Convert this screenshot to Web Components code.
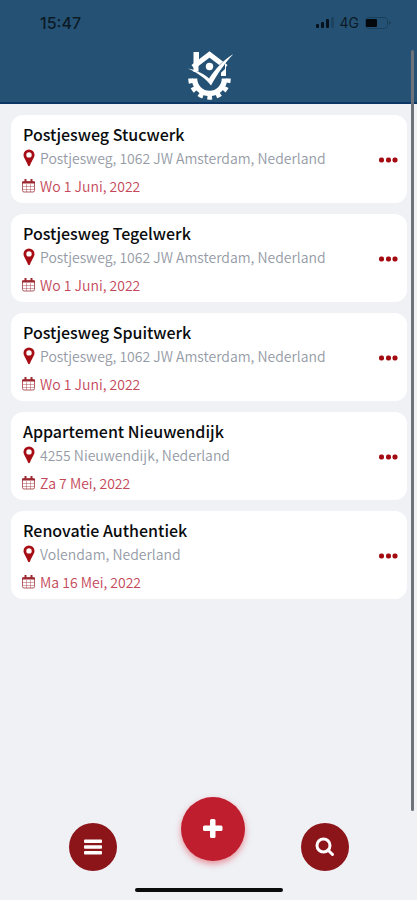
<!DOCTYPE html>
<html lang="nl">
<head>
<meta charset="utf-8">
<meta name="viewport" content="width=device-width, initial-scale=1">
<title>Projecten</title>
<style>
html, body { margin: 0; }
body { background: #eff1f5; font-family: "Noto Sans CJK JP", "Noto Sans", sans-serif; }
</style>
</head>
<body>
<project-app></project-app>

<template id="t-app">
<style>
:host { display: flex; flex-direction: column; min-height: 100vh; position: relative; background: #eff1f5; }
main { flex: 1; display: flex; flex-direction: column; gap: 11px; padding: 11px 10px 11px 11px; }
.scroll { position: absolute; top: 50px; bottom: 89px; right: 3px; width: 3px; border-radius: 2px; background: #6d737b; }
</style>
<app-header></app-header>
<main>
<project-card date="Wo 1 Juni, 2022" place="Postjesweg, 1062 JW Amsterdam, Nederland">Postjesweg Stucwerk</project-card>
<project-card date="Wo 1 Juni, 2022" place="Postjesweg, 1062 JW Amsterdam, Nederland">Postjesweg Tegelwerk</project-card>
<project-card date="Wo 1 Juni, 2022" place="Postjesweg, 1062 JW Amsterdam, Nederland">Postjesweg Spuitwerk</project-card>
<project-card date="Za 7 Mei, 2022" place="4255 Nieuwendijk, Nederland">Appartement Nieuwendijk</project-card>
<project-card date="Ma 16 Mei, 2022" place="Volendam, Nederland">Renovatie Authentiek</project-card>
</main>
<bottom-bar></bottom-bar>
<div class="scroll"></div>
</template>

<template id="t-header">
<style>
:host { display: block; box-sizing: border-box; height: 104px; background: #255274; border-bottom: 2px solid #0d3565; }
.status { display: flex; align-items: center; justify-content: space-between; height: 48px; padding: 0 26px 2px 40px; box-sizing: border-box; color: #0c1a26; }
time { font: 500 16px/20px Inter, sans-serif; }
.right { display: flex; align-items: center; gap: 6px; font: 400 14px/20px Inter, sans-serif; }
.logo { display: block; margin: 2px auto 0; width: 48px; height: 50px; }
svg { display: block; }
</style>
<div class="status">
<time>15:47</time>
<div class="right">
<svg width="18" height="12" viewBox="0 0 18 12"><g fill="#07121c"><rect y="7" width="3" height="4" rx="1"/><rect x="5" y="5" width="3" height="6" rx="1"/><rect x="10" y="2" width="3" height="9" rx="1"/></g><rect x="15" width="3" height="11" rx="1" fill="#1d4361"/></svg>
<span>4G</span>
<svg width="26" height="12" viewBox="0 0 26 12"><rect x=".5" y=".5" width="22" height="11" rx="3" fill="none" stroke="#1b405c"/><rect x="1" y="2" width="11" height="8" rx="1" fill="#03080d"/><path d="M24 4c2 1 2 3 0 4z" fill="#17384f"/></svg>
</div>
</div>
<svg class="logo" viewBox="0 0 48 50" role="img" aria-label="Logo">
<g fill="none" stroke="#fff">
<path d="M9.500 28.500A15 15 0 0 0 39.500 28.500" stroke-width="5.500"/>
<path d="M5.500 28.500A19 19 0 0 0 43.500 28.500" stroke-width="4.500" stroke-dasharray="4.800 4.350"/>
<path d="M8 17L24.500 4.500L41 17" stroke-width="5"/>
<path d="M11 14v8M38.500 15v11" stroke-width="5"/>
</g>
<path d="M8.500 2H14v8l-5.500 5z" fill="#fff"/>
<circle cx="24.500" cy="16.500" r="3.700" fill="#fff"/>
<path d="M12 21C17 23 21 25 24 28C30 20 34 14 40 10V19C33 25 30 30 26 37C21 31 17 27 12 25z" fill="#255274"/>
<path d="M3 18.500C12 20 19 24 24 28.500C31 18 39 10 48.500 4C40 13 33 23 26 35.500C20 28 13 23 3 18.500z" fill="#fff"/>
</svg>
</template>

<template id="t-card">
<style>
:host { display: flex; align-items: center; justify-content: space-between; box-sizing: border-box; min-height: 88px; padding: 6px 5px 5px 11px; border-radius: 12px; background: #fff; }
h2 { margin: 0 0 0 1px; font-size: 16px; line-height: 24px; font-weight: 500; color: #090b0d; }
p { display: flex; align-items: center; gap: 5px; margin: 0 0 0 1px; font-size: 14px; line-height: 24px; font-weight: 350; color: #959ba6; }
.date { margin: 4px 0 0; color: #c4485a; }
svg { display: block; flex: none; }
button { display: flex; align-items: center; justify-content: center; width: 28px; height: 28px; padding: 0; border: 0; background: none; }
</style>
<div>
<h2><slot></slot></h2>
<p><svg width="12" height="18" viewBox="0 0 12 18"><path fill="#a60d14" fill-rule="evenodd" d="M6 .5a5.500 5.500 0 0 0-5.500 5.500C.5 8.500 3 11 5 16.500Q6 18 7 16.500C9 11 11.500 8.500 11.500 6A5.500 5.500 0 0 0 6 .5zm0 2.700a2.700 2.700 0 1 1 0 5.400a2.700 2.700 0 0 1 0-5.400z"/></svg><span class="place"></span></p>
<p class="date"><svg width="13" height="14" viewBox="0 0 13 14" fill="none" stroke="#9c2930"><rect x=".5" y="2.500" width="12" height="10.500" rx="1.500" stroke-opacity=".75"/><path d="M0 3.500h13" stroke-width="2"/><path d="M3.500 0v4M9.500 0v4" stroke-width="2"/><path d="M4.500 5v8M8.500 5v8M1 7.500h11M1 10.500h11" stroke-opacity=".4"/></svg><time></time></p>
</div>
<button type="button" aria-label="Meer opties"><svg width="20" height="6" viewBox="0 0 20 6" fill="#a30a12"><rect x="1" y=".5" width="5" height="5" rx="2"/><rect x="8" y=".5" width="5" height="5" rx="2"/><rect x="14.500" y=".5" width="5" height="5" rx="2"/></svg></button>
</template>

<template id="t-round">
<style>
:host { display: block; }
button { display: flex; align-items: center; justify-content: center; width: 48px; height: 48px; padding: 0; border: 0; border-radius: 50%; background: #8c151a; }
:host([large]) button { width: 64px; height: 64px; background: #bf1e2e; box-shadow: 0 3px 6px #e0334480; }
::slotted(svg) { display: block; }
</style>
<button type="button"><slot></slot></button>
</template>

<template id="t-bar">
<style>
:host { display: block; padding-bottom: 8px; }
nav { display: grid; grid-template-columns: 13fr auto 12fr; align-items: end; padding: 0 68px 0 69px; }
.plus { margin-bottom: 10px; }
.end { justify-self: end; }
.home { width: 148px; height: 4px; margin: 17px auto 0; border-radius: 2px; background: #090b0d; }
</style>
<nav>
<round-button label="Menu"><svg width="18" height="16" viewBox="0 0 18 16" fill="#fff"><rect y=".5" width="18" height="3.500" rx="1"/><rect y="6.250" width="18" height="3.500" rx="1"/><rect y="12" width="18" height="3.500" rx="1"/></svg></round-button>
<round-button class="plus" large label="Toevoegen"><svg width="20" height="20" viewBox="0 0 20 20" fill="#fff"><rect x="7" width="5.500" height="19" rx="1.500"/><rect y="6.500" width="19.500" height="5.500" rx="1.500"/></svg></round-button>
<round-button class="end" label="Zoeken"><svg width="20" height="20" viewBox="0 0 20 20" fill="none" stroke="#fff"><circle cx="8.500" cy="8.500" r="6.500" stroke-width="3"/><path d="M13 13l4.500 4.500" stroke-width="3" stroke-linecap="round"/></svg></round-button>
</nav>
<div class="home"></div>
</template>

<script>
class Base extends HTMLElement {
  constructor() {
    super();
    this.attachShadow({ mode: "open" }).append(document.getElementById(this.constructor.template).content.cloneNode(true));
  }
}
class AppHeader extends Base { static template = "t-header"; }
class ProjectCard extends Base {
  static template = "t-card";
  connectedCallback() {
    this.shadowRoot.querySelector(".place").textContent = this.getAttribute("place");
    this.shadowRoot.querySelector("time").textContent = this.getAttribute("date");
  }
}
class RoundButton extends Base {
  static template = "t-round";
  connectedCallback() {
    this.shadowRoot.querySelector("button").setAttribute("aria-label", this.getAttribute("label"));
  }
}
class BottomBar extends Base { static template = "t-bar"; }
class ProjectApp extends Base { static template = "t-app"; }
customElements.define("app-header", AppHeader);
customElements.define("project-card", ProjectCard);
customElements.define("round-button", RoundButton);
customElements.define("bottom-bar", BottomBar);
customElements.define("project-app", ProjectApp);
</script>
</body>
</html>
